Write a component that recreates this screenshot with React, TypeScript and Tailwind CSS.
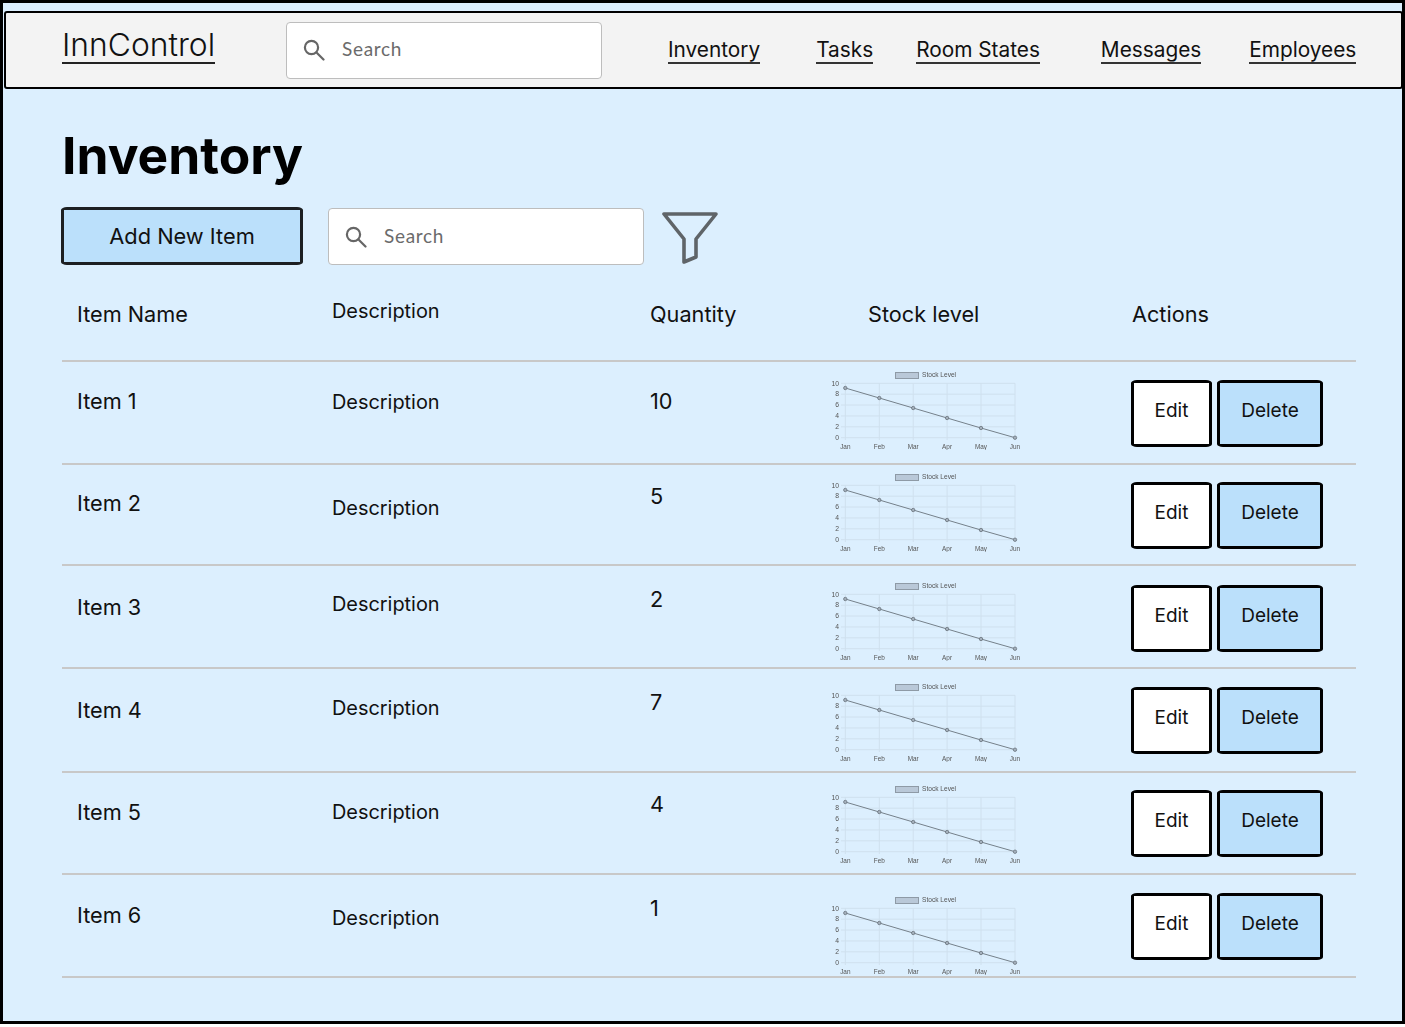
const rows = [
  { name: 'Item 1', qty: '10', h: 'h-[103px]', namePt: 'pt-[25px]', descPt: 'pt-[26px]', qtyPt: 'pt-[25px]', chartPt: 'pt-[8px]', btnPt: 'pt-[18px]' },
  { name: 'Item 2', qty: '5', h: 'h-[101px]', namePt: 'pt-[24px]', descPt: 'pt-[29px]', qtyPt: 'pt-[17px]', chartPt: 'pt-[7px]', btnPt: 'pt-[17px]' },
  { name: 'Item 3', qty: '2', h: 'h-[103px]', namePt: 'pt-[27px]', descPt: 'pt-[24px]', qtyPt: 'pt-[19px]', chartPt: 'pt-[15px]', btnPt: 'pt-[19px]' },
  { name: 'Item 4', qty: '7', h: 'h-[104px]', namePt: 'pt-[27px]', descPt: 'pt-[25px]', qtyPt: 'pt-[19px]', chartPt: 'pt-[13px]', btnPt: 'pt-[18px]' },
  { name: 'Item 5', qty: '4', h: 'h-[102px]', namePt: 'pt-[25px]', descPt: 'pt-[25px]', qtyPt: 'pt-[17px]', chartPt: 'pt-[11px]', btnPt: 'pt-[17px]' },
  { name: 'Item 6', qty: '1', h: 'h-[103px]', namePt: 'pt-[26px]', descPt: 'pt-[29px]', qtyPt: 'pt-[19px]', chartPt: 'pt-[20px]', btnPt: 'pt-[18px]' },
]

const months = ['Jan', 'Feb', 'Mar', 'Apr', 'May', 'Jun']
const ticks = [10, 8, 6, 4, 2, 0]
const xs = [25.3, 59.3, 93.2, 127.1, 161, 195]
const ys = [28, 38, 48, 58, 68, 77.7]

function SearchBox() {
  return (
    <div className="flex h-[57px] w-[316px] items-center rounded-[4px] border border-[#bdbdbd] bg-white pl-[16px]">
      <svg width="22" height="22" viewBox="0 0 22 22" fill="none" stroke="#666" strokeWidth="2.2">
        <circle cx="8.5" cy="8.5" r="6.6" />
        <path d="M13.5 13.5 L20.5 20.5" strokeLinecap="round" />
      </svg>
      <span className="mb-px ml-[17px] font-['Lato',sans-serif] text-[19px] tracking-[0.7px] text-[#6b6b6b]">Search</span>
    </div>
  )
}

function StockChart() {
  return (
    <svg width="210" height="80" viewBox="0 10 210 80" className="block blur-[0.3px]">
      {ys.map((_, i) => (
        <line key={i} x1={xs[i]} x2={xs[i]} y1="23.3" y2="80" stroke="#cfe0ee" strokeWidth="1" />
      ))}
      {ticks.map((t, i) => (
        <line key={t} x1="21" x2="195" y1={23.3 + i * 10.88} y2={23.3 + i * 10.88} stroke="#cfe0ee" strokeWidth="1" />
      ))}
      <rect x="75.5" y="12.5" width="23" height="6" fill="#b9c8d8" stroke="#8e9aa6" strokeWidth="1" />
      <text x="102" y="17.2" fontSize="6.6" fill="#555" fontFamily="Liberation Sans, sans-serif">Stock Level</text>
      {ticks.map((t, i) => (
        <text key={t} x="19" y={25.5 + i * 10.88} textAnchor="end" fontSize="6.8" fill="#555" fontFamily="Liberation Sans, sans-serif">{t}</text>
      ))}
      {months.map((m, i) => (
        <text key={m} x={xs[i]} y="88.5" textAnchor="middle" fontSize="6.4" fill="#555" fontFamily="Liberation Sans, sans-serif">{m}</text>
      ))}
      <polyline points={xs.map((x, i) => `${x},${ys[i]}`).join(' ')} fill="none" stroke="#75808a" strokeWidth="1" />
      {xs.map((x, i) => (
        <circle key={x} cx={x} cy={ys[i]} r="1.7" fill="#a4b0bc" stroke="#69747e" strokeWidth="0.8" />
      ))}
    </svg>
  )
}

export default function App() {
  return (
    <div className="h-[1024px] w-[1405px] border-[3px] border-black bg-[#dceffe] font-['Inter',sans-serif] text-[#111]">
      <nav className="-mr-px ml-px mt-[8px] flex h-[78px] items-center rounded-[3px] border-2 border-black bg-[#f3f3f3] pl-[56px]">
        <a className="mb-[8px] w-[224px] shrink-0">
          <span className="inline-block border-b-2 border-[#222] text-[31.8px] font-light leading-[34px]">InnControl</span>
        </a>
        <SearchBox />
        <div className="ml-[66px] flex text-[20.8px] leading-[25px]">
          <a className="border-b-2 border-[#333]">Inventory</a>
          <a className="ml-[56px] border-b-2 border-[#333]">Tasks</a>
          <a className="ml-[43px] border-b-2 border-[#333]">Room States</a>
          <a className="ml-[61px] border-b-2 border-[#333]">Messages</a>
          <a className="ml-[48px] border-b-2 border-[#333]">Employees</a>
        </div>
      </nav>

      <main className="pl-[59px] pr-[46px]">
        <h1 className="mt-[36px] text-[51.5px] font-bold leading-[60px] text-black">Inventory</h1>

        <div className="-ml-px mt-[22px] flex items-start">
          <button className="flex h-[58px] w-[242px] items-center justify-center rounded-[6px/3px] border-[3px] border-[#1c1f22] bg-[#bbe0fb] text-[21.8px]">
            Add New Item
          </button>
          <div className="ml-[25px] mt-px">
            <SearchBox />
          </div>
          <svg width="60" height="56" viewBox="0 0 60 56" className="ml-[16px] mt-[2px]" fill="none" stroke="#5f6468" strokeWidth="3.6" strokeLinejoin="round">
            <path d="M4 5 H56 L36 30 V48 L24 53 V30 Z" />
          </svg>
        </div>

        <div className="flex h-[97px] border-b-2 border-[#c8c8c8] text-[21.7px] leading-[28px]">
          <div className="w-[270px] pl-[15px] pt-[35px]">Item Name</div>
          <div className="w-[318px] pt-[32px] text-[19.9px]">Description</div>
          <div className="w-[218px] pt-[35px]">Quantity</div>
          <div className="w-[264px] pt-[35px]">Stock level</div>
          <div className="pt-[35px]">Actions</div>
        </div>

        {rows.map((r) => (
          <div key={r.name} className={`flex border-b-2 border-[#c8c8c8] text-[21.7px] leading-[28px] ${r.h}`}>
            <div className={`w-[270px] pl-[15px] ${r.namePt}`}>{r.name}</div>
            <div className={`w-[318px] text-[19.9px] ${r.descPt}`}>Description</div>
            <div className={`w-[170px] ${r.qtyPt}`}>{r.qty}</div>
            <div className={`w-[311px] ${r.chartPt}`}>
              <StockChart />
            </div>
            <div className={`flex items-start gap-[5px] text-[19px] ${r.btnPt}`}>
              <button className="flex h-[67px] w-[81px] items-center justify-center rounded-[6px/3px] border-[3px] border-black bg-white pb-[5px]">Edit</button>
              <button className="flex h-[67px] w-[106px] items-center justify-center rounded-[6px/3px] border-[3px] border-black bg-[#bbe0fb] pb-[5px]">Delete</button>
            </div>
          </div>
        ))}
      </main>
    </div>
  )
}
